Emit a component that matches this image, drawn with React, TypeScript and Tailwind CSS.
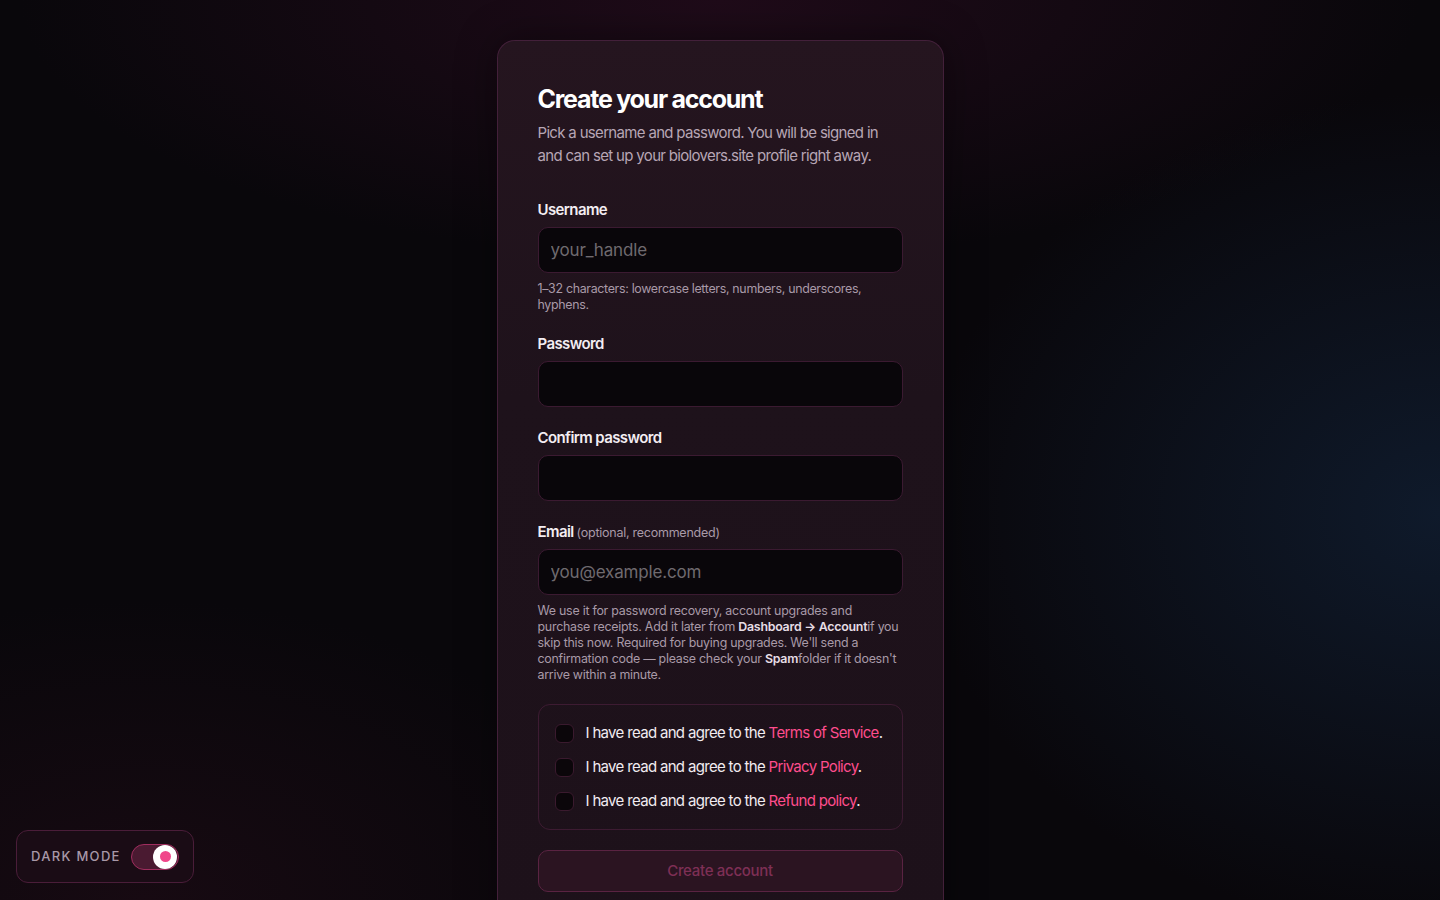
import React from "react";

const font = { fontFamily: "Inter, 'Noto Sans', sans-serif" };

function Field({
  label,
  extra,
  placeholder,
  type = "text",
  children,
}: {
  label: string;
  extra?: string;
  placeholder?: string;
  type?: string;
  children?: React.ReactNode;
}) {
  return (
    <div className="flex flex-col">
      <label className="flex h-5 items-baseline text-[15px] leading-5 font-semibold text-[#f3edf2] tracking-[-0.04em]">
        {label}
        {extra && (
          <span className="ml-[3px] text-[12.5px] leading-5 font-normal text-[#a99aa8] tracking-[-0.02em]">{extra}</span>
        )}
      </label>
      <input
        type={type}
        placeholder={placeholder}
        className="mt-[7px] h-[46px] w-full rounded-[10px] border border-[#3b1a31] bg-[#09060a] px-3 text-[17px] text-[#eee] placeholder:text-[#6f6a6f] outline-none tracking-[-0.01em]"
      />
      {children}
    </div>
  );
}

function Check({ label }: { label: string }) {
  return (
    <label className="flex h-6 items-center gap-3">
      <span className="h-[19px] w-[19px] shrink-0 rounded-[6px] border border-[#3a1a2e] bg-[#0b060a]" />
      <span className="whitespace-nowrap text-[15px] text-[#f1ebf0] tracking-[-0.045em]">
        I have read and agree to the <span className="text-[#ff4d8d]">{label}</span>.
      </span>
    </label>
  );
}

export default function App() {
  return (
    <div
      style={font}
      className="relative h-[900px] w-full overflow-hidden bg-[#09070b] bg-[radial-gradient(ellipse_700px_260px_at_50%_0%,#1f0b19_0%,transparent_100%),radial-gradient(ellipse_520px_420px_at_100%_57%,#0f1a2b_0%,transparent_100%),radial-gradient(ellipse_500px_300px_at_10%_100%,#170a12_0%,transparent_100%)]"
    >
      <div className="mx-auto mt-10 w-[447px] rounded-t-[18px] border border-b-0 border-[#43203a] bg-[linear-gradient(180deg,#25151f_0%,#1e121b_40%,#1d111a_100%)] px-10 pt-[42px] pb-10 shadow-[0_0_40px_rgba(0,0,0,0.4)]">
        <h1 className="text-[25px] leading-8 font-bold text-white tracking-[-0.05em]">Create your account</h1>
        <p className="mt-[6px] text-[15px] leading-[23px] text-[#b7a6b5] tracking-[-0.045em]">
          Pick a username and password. You will be signed in and can set up your biolovers.site profile right away.
        </p>

        <div className="mt-[33px] flex flex-col gap-[21px]">
          <Field label="Username" placeholder="your_handle">
            <p className="mt-2 text-[12.4px] leading-4 text-[#a99aa8] tracking-[-0.025em]">
              1–32 characters: lowercase letters, numbers, underscores, hyphens.
            </p>
          </Field>
          <Field label="Password" type="password" />
          <Field label="Confirm password" type="password" />
          <Field label="Email" extra="(optional, recommended)" placeholder="you@example.com" type="email">
            <p className="mt-2 text-[12.4px] leading-4 text-[#a99aa8] tracking-[-0.02em]">
              We use it for password recovery, account upgrades and purchase receipts. Add it later from{" "}
              <b className="font-semibold text-[#e6dde5]">Dashboard → Account</b>if you skip this now. Required for
              buying upgrades. We'll send a confirmation code — please check your{" "}
              <b className="font-semibold text-[#e6dde5]">Spam</b>folder if it doesn't arrive within a minute.
            </p>
          </Field>

          <div className="flex flex-col gap-[10px] rounded-[12px] border border-[#3d1b32] p-4">
            <Check label="Terms of Service" />
            <Check label="Privacy Policy" />
            <Check label="Refund policy" />
          </div>

          <button className="-mt-px h-[42px] w-full rounded-[10px] border border-[#5a2342] bg-[#2b1421] text-[15px] font-medium text-[#7e2f55] tracking-[-0.02em]">
            Create account
          </button>
        </div>
      </div>

      <div className="absolute bottom-[17px] left-4 flex h-[53px] w-[178px] items-center justify-between rounded-[12px] border border-[#4a1d39] bg-[#1a0c15] pl-[14px] pr-[14px]">
        <span className="text-[13px] font-medium tracking-[0.1em] text-[#a898a8]">DARK MODE</span>
        <span className="flex h-[26px] w-[48px] items-center justify-end rounded-full border border-[#a02d5e] bg-[#4a1a31] pr-[1px]">
          <span className="flex h-[24px] w-[24px] items-center justify-center rounded-full bg-white">
            <span className="h-[11px] w-[11px] rounded-full bg-[#f0468a]" />
          </span>
        </span>
      </div>
    </div>
  );
}
